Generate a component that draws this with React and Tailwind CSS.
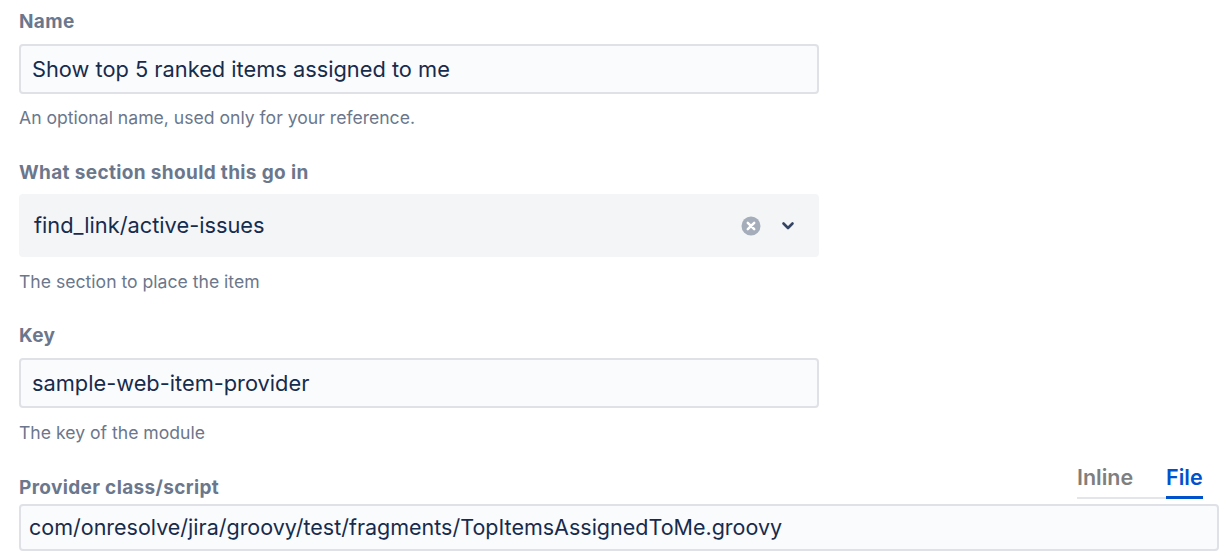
import React from 'react';

const font = { fontFamily: 'Inter, "Noto Sans", sans-serif' };

const Label = ({ children }) => (
  <div className="text-[19px] leading-6 font-bold tracking-[0.35px] text-[#6b778c]">{children}</div>
);

const Help = ({ children }) => (
  <div className="text-[17.6px] leading-6 text-[#6b778c]">{children}</div>
);

const TextInput = ({ value }) => (
  <div className="mt-[10px] h-[50px] w-[800px] rounded-[4px] border-2 border-[#dfe1e6] bg-[#fafbfc] px-[11px] flex items-center text-[21.8px] text-[#172b4d]">
    {value}
  </div>
);

function ClearIcon() {
  return (
    <svg width="20" height="20" viewBox="0 0 20 20">
      <circle cx="10" cy="10" r="9.5" fill="#a5adba" />
      <path d="M6.8 6.8 L13.2 13.2 M13.2 6.8 L6.8 13.2" stroke="#fff" strokeWidth="2.5" strokeLinecap="round" />
    </svg>
  );
}

function ChevronIcon() {
  return (
    <svg width="14" height="10" viewBox="0 0 14 10">
      <path d="M2.5 2.5 L7 7 L11.5 2.5" stroke="#344563" strokeWidth="2.6" fill="none" strokeLinecap="round" strokeLinejoin="round" />
    </svg>
  );
}

export default function App() {
  return (
    <div className="min-h-screen bg-white pl-[19px] pr-[7px] pt-[10px]" style={font}>
      {/* Name */}
      <Label>Name</Label>
      <TextInput value="Show top 5 ranked items assigned to me" />
      <div className="mt-[12px]">
        <Help>An optional name, used only for your reference.</Help>
      </div>

      {/* Section */}
      <div className="mt-[31px]">
        <Label>What section should this go in</Label>
      </div>
      <div className="mt-[9px] h-[63px] w-[800px] rounded-[4px] bg-[#f4f5f7] pl-[15px] pr-[24px] flex items-center text-[21.8px] text-[#172b4d]">
        <span className="flex-1">find_link/active-issues</span>
        <div className="flex items-center gap-[20px]">
          <ClearIcon />
          <ChevronIcon />
        </div>
      </div>
      <div className="mt-[13px]">
        <Help>The section to place the item</Help>
      </div>

      {/* Key */}
      <div className="mt-[30px]">
        <Label>Key</Label>
      </div>
      <TextInput value="sample-web-item-provider" />
      <div className="mt-[13px]">
        <Help>The key of the module</Help>
      </div>

      {/* Provider */}
      <div className="mt-[19px] flex items-end justify-between w-[1200px]">
        <div className="mb-[-1px]">
          <Label>Provider class/script</Label>
        </div>
        <div className="flex items-end mr-[16px]">
          <div className="w-[89px] pb-[7px] border-b-2 border-[#e4e5e9] text-[21.5px] font-semibold leading-[26px] text-[#7f7f7f]">
            Inline
          </div>
          <div className="w-[37px] pb-[6px] border-b-[3px] border-[#0052cc] text-[21.5px] font-semibold leading-[26px] text-[#0052cc]">
            File
          </div>
        </div>
      </div>
      <div className="mt-[5px] h-[47px] w-[1200px] rounded-[4px] border-2 border-[#dfe1e6] bg-[#fafbfc] px-[8px] flex items-center text-[21.5px] text-[#172b4d]">
        com/onresolve/jira/groovy/test/fragments/TopItemsAssignedToMe.groovy
      </div>
    </div>
  );
}
